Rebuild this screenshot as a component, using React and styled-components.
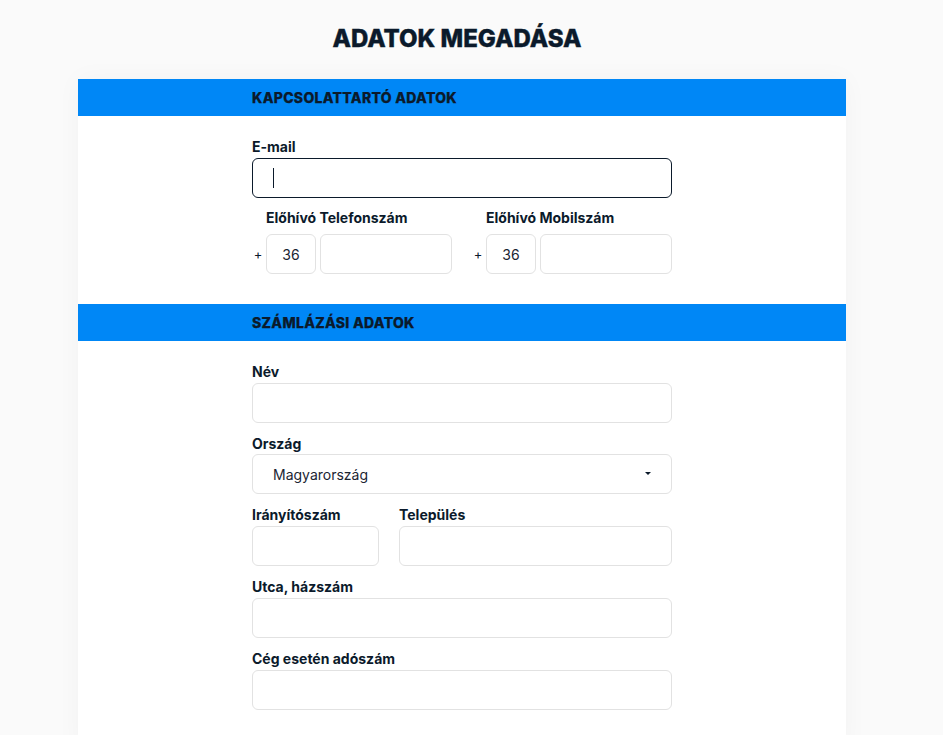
import React from "react";
import styled, { createGlobalStyle } from "styled-components";

const Global = createGlobalStyle`
  html, body { margin: 0; padding: 0; background: #fafafa; }
  body { font-family: Inter, "Noto Sans", Arial, sans-serif; color: #0b1a2b; }
  * { box-sizing: border-box; }
`;

const Page = styled.div`
  width: 924px;
  display: flex;
  flex-direction: column;
  align-items: center;
`;

const Title = styled.h1`
  margin: 0;
  padding: 24px 10px 0 0;
  height: 79px;
  font-size: 24px;
  line-height: 29px;
  font-weight: 800;
  -webkit-text-stroke: 0.4px #0b1a2b;
  color: #0b1a2b;
`;

const Card = styled.div`
  width: 768px;
  background: #fff;
  box-shadow: 0 0 24px rgba(0, 0, 0, 0.035);
  padding-bottom: 40px;
`;

const SectionBar = styled.div`
  height: 37px;
  background: #0087f6;
  display: flex;
  align-items: center;
  padding-left: 174px;
  font-size: 14px;
  font-weight: 800;
  letter-spacing: 0.3px;
  -webkit-text-stroke: 0.25px #0b1a2b;
  color: #0b1a2b;
`;

const Body = styled.div`
  width: 420px;
  margin: 0 auto;
  padding: ${(p) => p.$pt || 21}px 0 ${(p) => p.$pb || 0}px;
  display: flex;
  flex-direction: column;
  gap: ${(p) => p.$gap || 11}px;
`;

const Field = styled.div`
  display: flex;
  flex-direction: column;
  gap: ${(p) => (p.$tight ? 0 : 1)}px;
  flex: ${(p) => (p.$w ? `0 0 ${p.$w}px` : "1")};
`;

const Label = styled.label`
  font-size: 14px;
  font-weight: 700;
  line-height: 20px;
  color: #0b1a2b;
`;

const Input = styled.div`
  height: 40px;
  border: 1px solid ${(p) => (p.$focus ? "#0b1a2b" : "#e2e2e2")};
  border-radius: 6px;
  background: #fff;
  display: flex;
  align-items: center;
  justify-content: ${(p) => (p.$center ? "center" : "flex-start")};
  padding: ${(p) => (p.$center ? "0" : "0 20px")};
  font-size: 14px;
  color: #1b2533;
  position: relative;
`;

const Caret = styled.span`
  width: 1px;
  height: 20px;
  background: #0b1a2b;
`;

const Row = styled.div`
  display: flex;
  gap: 20px;
`;

const PhoneGroup = styled.div`
  flex: 1;
  display: grid;
  grid-template-columns: 14px 50px 1fr;
  grid-template-rows: 20px 40px;
  row-gap: 6px;
`;

const PhoneLabel = styled(Label)`
  grid-column: 2 / 4;
`;

const Plus = styled.span`
  font-size: 13px;
  color: #0b1a2b;
  display: flex;
  align-items: center;
  justify-content: center;
  padding-right: 2px;
`;

const Number = styled(Input)`
  margin-left: 4px;
`;

const SelectArrow = styled.span`
  position: absolute;
  right: 20px;
  top: 50%;
  margin-top: -2px;
  width: 0;
  height: 0;
  border-left: 3px solid transparent;
  border-right: 3px solid transparent;
  border-top: 3px solid #0b1a2b;
`;

export default function App() {
  return (
    <>
      <Global />
      <Page>
        <Title>ADATOK MEGADÁSA</Title>
        <Card>
          <SectionBar>KAPCSOLATTARTÓ ADATOK</SectionBar>
          <Body $gap={10} $pb={30}>
            <Field>
              <Label>E-mail</Label>
              <Input $focus>
                <Caret />
              </Input>
            </Field>
            <Row>
              <PhoneGroup>
                <PhoneLabel>Előhívó Telefonszám</PhoneLabel>
                <Plus>+</Plus>
                <Input $center>36</Input>
                <Number />
              </PhoneGroup>
              <PhoneGroup>
                <PhoneLabel>Előhívó Mobilszám</PhoneLabel>
                <Plus>+</Plus>
                <Input $center>36</Input>
                <Number />
              </PhoneGroup>
            </Row>
          </Body>
          <SectionBar>SZÁMLÁZÁSI ADATOK</SectionBar>
          <Body>
            <Field>
              <Label>Név</Label>
              <Input />
            </Field>
            <Field $tight>
              <Label>Ország</Label>
              <Input>
                Magyarország
                <SelectArrow />
              </Input>
            </Field>
            <Row>
              <Field $w={127}>
                <Label>Irányítószám</Label>
                <Input />
              </Field>
              <Field>
                <Label>Település</Label>
                <Input />
              </Field>
            </Row>
            <Field>
              <Label>Utca, házszám</Label>
              <Input />
            </Field>
            <Field>
              <Label>Cég esetén adószám</Label>
              <Input />
            </Field>
          </Body>
        </Card>
      </Page>
    </>
  );
}
